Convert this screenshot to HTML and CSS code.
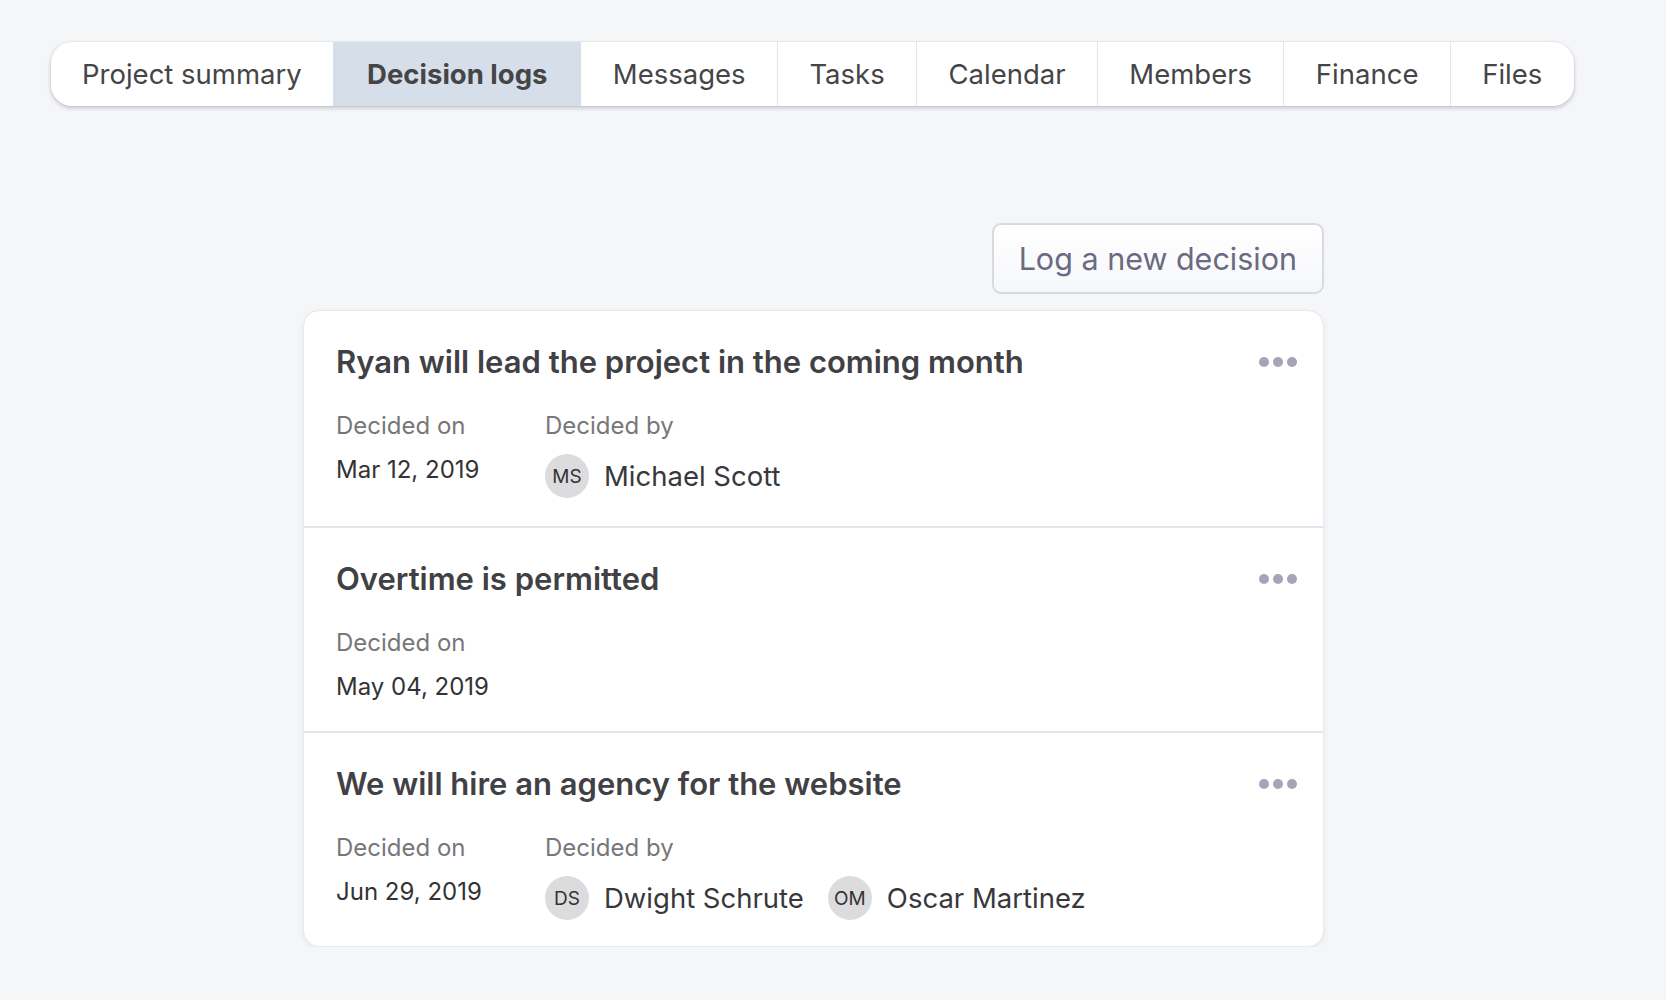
FILE: index.html
```html
<!DOCTYPE html>
<html lang="en">
<head>
<meta charset="utf-8">
<title>Decision logs</title>
<link rel="stylesheet" href="styles.css">
</head>
<body>
<div class="page">
  <nav class="tabs">
    <a class="tab">Project summary</a>
    <a class="tab active">Decision logs</a>
    <a class="tab">Messages</a>
    <a class="tab">Tasks</a>
    <a class="tab">Calendar</a>
    <a class="tab">Members</a>
    <a class="tab">Finance</a>
    <a class="tab">Files</a>
  </nav>

  <main class="content">
    <div class="actions">
      <button class="btn">Log a new decision</button>
    </div>

    <section class="card">
      <article class="row">
        <header class="row-head">
          <h2 class="title">Ryan will lead the project in the coming month</h2>
          <span class="dots"><i></i><i></i><i></i></span>
        </header>
        <div class="meta">
          <div class="col col-on">
            <div class="label">Decided on</div>
            <div class="date">Mar 12, 2019</div>
          </div>
          <div class="col">
            <div class="label">Decided by</div>
            <div class="people">
              <span class="person"><span class="avatar">MS</span><span class="name">Michael Scott</span></span>
            </div>
          </div>
        </div>
      </article>

      <article class="row">
        <header class="row-head">
          <h2 class="title">Overtime is permitted</h2>
          <span class="dots"><i></i><i></i><i></i></span>
        </header>
        <div class="meta">
          <div class="col col-on">
            <div class="label">Decided on</div>
            <div class="date">May 04, 2019</div>
          </div>
        </div>
      </article>

      <article class="row">
        <header class="row-head">
          <h2 class="title">We will hire an agency for the website</h2>
          <span class="dots"><i></i><i></i><i></i></span>
        </header>
        <div class="meta">
          <div class="col col-on">
            <div class="label">Decided on</div>
            <div class="date">Jun 29, 2019</div>
          </div>
          <div class="col">
            <div class="label">Decided by</div>
            <div class="people">
              <span class="person"><span class="avatar">DS</span><span class="name">Dwight Schrute</span></span>
              <span class="person"><span class="avatar">OM</span><span class="name">Oscar Martinez</span></span>
            </div>
          </div>
        </div>
      </article>
    </section>
  </main>
</div>
</body>
</html>
```

FILE: styles.css
```css
* { box-sizing: border-box; }

html, body {
  margin: 0;
  padding: 0;
  background: #f5f6f8;
  font-family: Inter, "Noto Sans", "Liberation Sans", sans-serif;
  color: #444;
}

.page {
  padding: 42px 51px 0 51px;
}

.tabs {
  display: inline-flex;
  height: 64px;
  background: #fff;
  border-radius: 21px;
  overflow: hidden;
  box-shadow: 0 2px 4px rgba(70, 70, 110, 0.28), 0 0 0 1px rgba(0, 0, 0, 0.03);
}

.tab {
  display: flex;
  align-items: center;
  padding: 0 31.4px;
  font-size: 27.5px;
  color: #454548;
  border-left: 1px solid #e4e4e7;
  white-space: nowrap;
}

.tab:first-child { border-left: none; padding-left: 31px; }
.tab.active + .tab { border-left: none; }

.tab.active {
  background: #d6dfe9;
  font-weight: 700;
  border-left: none;
  padding: 0 34px;
}

.content {
  width: 1021px;
  margin: 117px 0 0 252px;
}

.actions {
  display: flex;
  justify-content: flex-end;
  margin-bottom: 16px;
}

.btn {
  height: 71px;
  padding: 0 25px;
  font-family: inherit;
  font-size: 30.5px;
  color: #6a6a82;
  background: linear-gradient(#ffffff, #f6f7fa);
  border: 2px solid #d9d9e0;
  border-radius: 9px;
}

.card {
  background: #fff;
  border: 1px solid #e8e8ed;
  border-radius: 16px;
  box-shadow: 0 2px 6px rgba(0, 0, 0, 0.06);
}

.row {
  padding: 33px 26px 28px 32px;
}

.row + .row {
  border-top: 2px solid #e1e7ee;
  padding-top: 33px;
}

.row:last-child {
  padding-bottom: 26px;
}

.row-head {
  display: flex;
  align-items: center;
  justify-content: space-between;
}

.title {
  margin: 0;
  font-size: 31px;
  line-height: 36px;
  font-weight: 600;
  color: #414145;
}

.dots {
  display: flex;
  gap: 4px;
}

.dots i {
  width: 10px;
  height: 10px;
  border-radius: 50%;
  background: #a5a5ba;
}

.meta {
  display: flex;
  margin-top: 31px;
}

.col-on {
  width: 209px;
  flex: 0 0 209px;
}

.label {
  font-size: 24px;
  line-height: 30px;
  color: #77777a;
  margin-bottom: 13px;
}

.date {
  font-size: 24px;
  line-height: 32px;
  color: #333336;
}

.people {
  display: flex;
  gap: 24px;
}

.person {
  display: flex;
  align-items: center;
  gap: 15px;
}

.avatar {
  width: 44px;
  height: 44px;
  border-radius: 50%;
  background: #dcdcde;
  display: flex;
  align-items: center;
  justify-content: center;
  font-size: 19px;
  color: #333;
}

.name {
  font-size: 27.5px;
  color: #38383c;
}
```
